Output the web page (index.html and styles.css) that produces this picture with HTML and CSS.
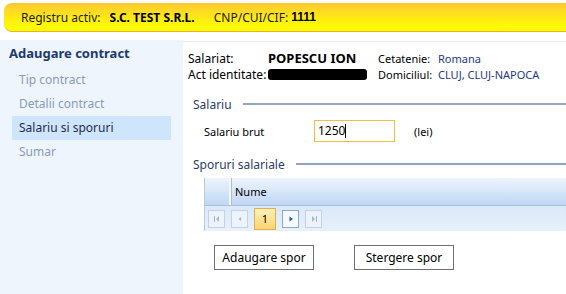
FILE: index.html
```html
<!DOCTYPE html>
<html lang="ro">
<head>
    <meta charset="UTF-8">
    <title>Adaugare contract</title>
    <link rel="stylesheet" href="styles.css">
</head>
<body>
    <div class="topbar">
        <span class="lbl">Registru activ:</span>
        <span class="firm">S.C. TEST S.R.L.</span>
        <span class="lbl cnp">CNP/CUI/CIF:</span>
        <span class="code">1111</span>
    </div>

    <div class="main">
        <div class="sidebar">
            <div class="side-title">Adaugare contract</div>
            <div class="side-item">Tip contract</div>
            <div class="side-item">Detalii contract</div>
            <div class="side-item active">Salariu si sporuri</div>
            <div class="side-item">Sumar</div>
        </div>

        <div class="content">
            <div class="person">
                <div class="prow">
                    <span class="pl">Salariat:</span>
                    <span class="pname">POPESCU ION</span>
                    <span class="pl2">Cetatenie:</span>
                    <span class="pv">Romana</span>
                </div>
                <div class="prow">
                    <span class="pl">Act identitate:</span>
                    <span class="redact"></span>
                    <span class="pl2">Domiciliul:</span>
                    <span class="pv">CLUJ, CLUJ-NAPOCA</span>
                </div>
            </div>

            <div class="group">
                <span class="gtitle">Salariu</span>
                <span class="gline"></span>
            </div>
            <div class="field">
                <span class="flabel">Salariu brut</span>
                <div class="input">1250<span class="caret"></span></div>
                <span class="unit">(lei)</span>
            </div>

            <div class="group">
                <span class="gtitle">Sporuri salariale</span>
                <span class="gline"></span>
            </div>

            <div class="grid">
                <div class="ghead">
                    <div class="gsel"></div>
                    <div class="gcol">Nume</div>
                </div>
                <div class="pager">
                    <span class="pbtn">
                        <svg width="8" height="8" viewBox="0 0 8 8"><rect x="1" y="1" width="1" height="6" fill="#a8b8cc"/><path d="M6 1 L3 4 L6 7 Z" fill="#a8b8cc"/></svg>
                    </span>
                    <span class="pbtn">
                        <svg width="8" height="8" viewBox="0 0 8 8"><path d="M5 2 L2.5 4 L5 6 Z" fill="#a8b8cc"/></svg>
                    </span>
                    <span class="pbtn page">1</span>
                    <span class="pbtn on">
                        <svg width="8" height="8" viewBox="0 0 8 8"><path d="M2.5 1.5 L6 4 L2.5 6.5 Z" fill="#2b5aa8"/></svg>
                    </span>
                    <span class="pbtn">
                        <svg width="8" height="8" viewBox="0 0 8 8"><path d="M2 1 L5 4 L2 7 Z" fill="#a8b8cc"/><rect x="6" y="1" width="1" height="6" fill="#a8b8cc"/></svg>
                    </span>
                </div>
            </div>

            <div class="actions">
                <button class="btn">Adaugare spor</button>
                <button class="btn">Stergere spor</button>
            </div>
        </div>
    </div>
</body>
</html>
```

FILE: styles.css
```css
body {
    margin: 0;
    font-family: "Noto Sans", "Open Sans", sans-serif;
    font-size: 11px;
    color: #000;
    background: #fff;
    overflow: hidden;
}
.topbar {
    margin: 3px 0 0 4px;
    height: 28px;
    display: flex;
    align-items: center;
    padding-left: 17px;
    border-radius: 8px 0 0 8px;
    border-bottom: 1px solid #f0b020;
    background: linear-gradient(#ffc832, #ffee10 60%, #ffff00);
    font-size: 12px;
}
.lbl { color: #222; }
.firm { font-weight: bold; margin-left: 9px; }
.cnp { margin-left: 19px; }
.code {
    font-family: "Liberation Sans", Arial, sans-serif;
    font-weight: bold;
    margin-left: 3px;
}
.main {
    display: flex;
    margin-top: 8px;
    height: 260px;
}
.sidebar {
    width: 183px;
    background: #eef5fd;
    padding-top: 4px;
}
.side-title {
    font-size: 13px;
    font-weight: bold;
    color: #1d3a6e;
    padding-left: 9px;
    height: 24px;
}
.side-item {
    color: #8b9bb8;
    font-size: 12px;
    margin: 0 12px;
    padding-left: 7px;
    height: 24px;
    line-height: 24px;
}
.side-item.active {
    background: #cfe5fb;
    color: #1e2e4e;
}
.content {
    flex: 1;
    border-top: 1px solid #e8ecf0;
    margin-top: 1px;
    padding-left: 5px;
}
.person { padding-top: 8px; }
.prow {
    display: flex;
    align-items: center;
    height: 16px;
}
.pl { width: 80px; font-size: 12px; }
.pname {
    width: 110px;
    font-size: 13px;
    font-weight: bold;
}
.redact {
    width: 99px;
    height: 11px;
    margin-right: 11px;
    background: #000;
    border-radius: 3px;
}
.pl2 { width: 60px; font-size: 11px; }
.pv { color: #1f3a8a; font-size: 11px; }
.group {
    display: flex;
    align-items: center;
    margin-top: 12px;
    padding-left: 5px;
    height: 20px;
}
.gtitle { color: #2c3e66; font-size: 12px; }
.gline {
    flex: 1;
    height: 2px;
    background: #93a3c0;
    margin-left: 11px;
}
.field {
    display: flex;
    align-items: center;
    height: 22px;
    margin: 6px 0 4px;
    padding-left: 16px;
}
.flabel { width: 110px; font-size: 11px; }
.input {
    width: 76px;
    height: 20px;
    border: 1px solid #f0c040;
    padding-left: 3px;
    line-height: 20px;
    font-size: 12px;
    display: flex;
    align-items: center;
}
.caret {
    width: 1px;
    height: 14px;
    background: #000;
}
.unit { margin-left: 19px; font-size: 11px; }
.grid {
    margin: 4px 0 0 16px;
    border-left: 1px solid #b8cce4;
    background: #e4eefa;
}
.ghead {
    display: flex;
    height: 27px;
    background: linear-gradient(#eef5fe, #d4e4f8 55%, #c0d6f2);
    border-bottom: 1px solid #a8c0e0;
}
.gsel {
    width: 24px;
    border-right: 2px solid #f4f8fe;
    box-shadow: 1px 0 0 #a8c0e0;
}
.gcol {
    padding-left: 4px;
    line-height: 27px;
    font-size: 11px;
}
.pager {
    display: flex;
    align-items: center;
    height: 25px;
    padding-left: 3px;
    gap: 6px;
    background: linear-gradient(#dbe8f8, #e8f1fc);
}
.pbtn {
    width: 15px;
    height: 16px;
    border: 1px solid #c4d2e4;
    background: #edf3fb;
    display: flex;
    align-items: center;
    justify-content: center;
}
.pbtn.on {
    border-color: #8aa8d0;
    background: #f6f9fe;
}
.pbtn.page {
    width: 20px;
    height: 20px;
    border-color: #e0b050;
    background: linear-gradient(#fff0b8, #ffd570);
    font-size: 11px;
}
.actions {
    display: flex;
    gap: 40px;
    margin: 14px 0 0 26px;
}
.btn {
    width: 100px;
    height: 25px;
    background: #fff;
    border: 1px solid #707070;
    font-family: inherit;
    font-size: 12px;
    font-weight: normal;
    color: #000;
    padding: 0;
}
```
